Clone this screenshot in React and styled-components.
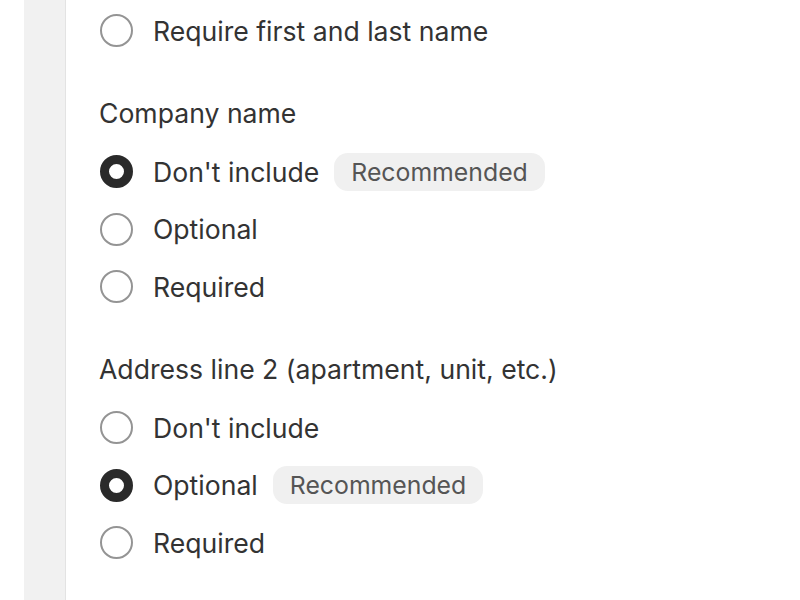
import React, { useState } from 'react';
import styled, { createGlobalStyle } from 'styled-components';

const GlobalStyle = createGlobalStyle`
  body {
    margin: 0;
    background: #ffffff;
    font-family: Inter, "Liberation Sans", sans-serif;
    color: #303030;
  }
`;

const Page = styled.div`
  display: flex;
  height: 600px;
  overflow: hidden;
  padding-left: 24px;
`;

const Rail = styled.div`
  width: 41px;
  flex-shrink: 0;
  background: #f1f1f1;
  border-right: 1px solid #e3e3e3;
`;

const Main = styled.div`
  flex: 1;
  padding: 2px 0 0 34px;
  display: flex;
  flex-direction: column;
  gap: 23.5px;
`;

const Section = styled.div`
  display: flex;
  flex-direction: column;
`;

const Legend = styled.div`
  height: 60px;
  display: flex;
  align-items: center;
  margin-left: -1px;
  font-size: 26.6px;
  color: #333333;
`;

const Option = styled.label`
  height: 57.5px;
  display: flex;
  align-items: center;
  gap: 20px;
  font-size: 26.6px;
  color: #333333;
  cursor: pointer;
`;

const Dot = styled.span`
  box-sizing: border-box;
  width: 33px;
  height: 33px;
  flex-shrink: 0;
  border-radius: 50%;
  background: #fff;
  border: ${p => (p.checked ? '9.5px solid #2a2a2a' : '2px solid #949494')};
`;

const Badge = styled.span`
  margin-left: -5px;
  height: 38px;
  display: inline-flex;
  align-items: center;
  padding: 0 17px;
  border-radius: 14px;
  background: #f0f0f0;
  color: #555555;
  font-size: 24.8px;
`;

const sections = [
  {
    key: 'name',
    label: null,
    options: [{ id: 'both', text: 'Require first and last name' }],
  },
  {
    key: 'company',
    label: 'Company name',
    options: [
      { id: 'none', text: "Don't include", recommended: true },
      { id: 'optional', text: 'Optional' },
      { id: 'required', text: 'Required' },
    ],
  },
  {
    key: 'address2',
    label: 'Address line 2 (apartment, unit, etc.)',
    options: [
      { id: 'none', text: "Don't include" },
      { id: 'optional', text: 'Optional', recommended: true },
      { id: 'required', text: 'Required' },
    ],
  },
];

const App = () => {
  const [values, setValues] = useState({
    name: 'last',
    company: 'none',
    address2: 'optional',
  });

  return (
    <>
      <GlobalStyle />
      <Page>
        <Rail />
        <Main>
          {sections.map(section => (
            <Section key={section.key}>
              {section.label ? <Legend>{section.label}</Legend> : null}
              {section.options.map(opt => (
                <Option
                  key={opt.id}
                  onClick={() => setValues({ ...values, [section.key]: opt.id })}
                >
                  <Dot checked={values[section.key] === opt.id} />
                  <span>{opt.text}</span>
                  {opt.recommended ? <Badge>Recommended</Badge> : null}
                </Option>
              ))}
            </Section>
          ))}
        </Main>
      </Page>
    </>
  );
};

export default App;
